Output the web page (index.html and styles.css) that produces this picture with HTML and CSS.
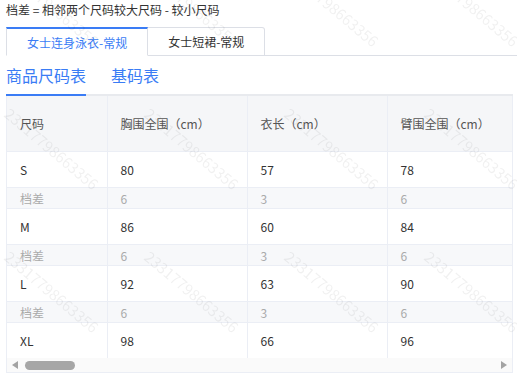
FILE: index.html
```html
<!DOCTYPE html>
<html lang="zh-CN">
<head>
    <meta charset="UTF-8">
    <meta name="viewport" content="width=device-width, initial-scale=1.0">
    <title>尺码表</title>
    <link rel="stylesheet" href="styles.css">
</head>
<body>
    <div class="page">
        <p class="note">档差 = 相邻两个尺码较大尺码 - 较小尺码</p>

        <!-- 款式切换 -->
        <div class="tabs">
            <div class="tab active">女士连身泳衣-常规</div>
            <div class="tab">女士短裙-常规</div>
        </div>

        <div class="subtabs">
            <div class="subtab active">商品尺码表</div>
            <div class="subtab">基码表</div>
        </div>

        <div class="table-box">
            <div class="table-scroll">
                <table class="size-table">
                    <colgroup>
                        <col class="c-size">
                        <col class="c-val">
                        <col class="c-val">
                        <col class="c-val">
                    </colgroup>
                    <thead>
                        <tr>
                            <th>尺码</th>
                            <th>胸围全围（cm）</th>
                            <th>衣长（cm）</th>
                            <th>臂围全围（cm）</th>
                        </tr>
                    </thead>
                    <tbody>
                        <tr class="row"><td>S</td><td>80</td><td>57</td><td>78</td></tr>
                        <tr class="diff"><td>档差</td><td>6</td><td>3</td><td>6</td></tr>
                        <tr class="row"><td>M</td><td>86</td><td>60</td><td>84</td></tr>
                        <tr class="diff"><td>档差</td><td>6</td><td>3</td><td>6</td></tr>
                        <tr class="row"><td>L</td><td>92</td><td>63</td><td>90</td></tr>
                        <tr class="diff"><td>档差</td><td>6</td><td>3</td><td>6</td></tr>
                        <tr class="row"><td>XL</td><td>98</td><td>66</td><td>96</td></tr>
                    </tbody>
                </table>
            </div>
            <!-- 横向滚动条 -->
            <div class="scrollbar">
                <svg class="arrow" width="7" height="8" viewBox="0 0 7 8"><path d="M6 0 L0 4 L6 8 Z" fill="#a3a3a3"/></svg>
                <div class="track"><div class="thumb"></div></div>
                <svg class="arrow" width="7" height="8" viewBox="0 0 7 8"><path d="M0 0 L6 4 L0 8 Z" fill="#a3a3a3"/></svg>
            </div>
        </div>
    </div>

    <!-- 水印 -->
    <div class="watermark">
        <span>23317798663356</span><span>23317798663356</span><span>23317798663356</span><span>23317798663356</span>
        <span>23317798663356</span><span>23317798663356</span><span>23317798663356</span><span>23317798663356</span>
        <span>23317798663356</span><span>23317798663356</span><span>23317798663356</span><span>23317798663356</span>
    </div>
</body>
</html>
```

FILE: styles.css
```css
body {
    margin: 0;
    font-family: "Noto Sans CJK SC", "Noto Sans", sans-serif;
    font-size: 12px;
    color: #333333;
    background: #ffffff;
    overflow: hidden;
}
.page {
    padding: 0 4px 0 6px;
}
.note {
    margin: 0 0 7px;
    line-height: 20px;
    color: #333333;
}

/* 款式切换 */
.tabs {
    display: flex;
    border-bottom: 1px solid #dcdfe6;
    margin-right: -4px;
}
.tab {
    height: 27px;
    line-height: 27px;
    padding: 0 20px;
    border: 1px solid #dcdfe6;
    border-left: none;
    border-radius: 0 3px 0 0;
    margin-bottom: -1px;
    color: #333333;
}
.tab.active {
    border-left: 1px solid #dcdfe6;
    border-top: 2px solid #3a7cf5;
    border-bottom: 1px solid #ffffff;
    border-radius: 0;
    height: 26px;
    color: #3a7cf5;
}

.subtabs {
    display: flex;
    gap: 25px;
    border-bottom: 2px solid #e8eaee;
}
.subtab {
    font-size: 16px;
    line-height: 38px;
    color: #3a7cf5;
    margin-bottom: -2px;
    border-bottom: 2px solid transparent;
}
.subtab.active {
    border-bottom-color: #3a7cf5;
}

/* 尺码表 */
.table-box {
    border: 1px solid #ebeef5;
    border-top: none;
}
.table-scroll {
    overflow: hidden;
}
.size-table {
    border-collapse: collapse;
    table-layout: fixed;
    width: 520px;
}
.c-size {
    width: 100px;
}
.c-val {
    width: 140px;
}
.size-table th,
.size-table td {
    text-align: left;
    padding: 0 0 0 13px;
    border-right: 1px solid #ebeef5;
    border-bottom: 1px solid #ebeef5;
    white-space: nowrap;
}
.size-table th {
    height: 55px;
    font-weight: normal;
    color: #555555;
    background: #f5f6f8;
}
.row td {
    height: 35px;
    color: #333333;
}
.diff td {
    height: 20px;
    color: #aaaaaa;
    background: #f7f8fa;
}
.row:last-child td {
    border-bottom: none;
}

/* 滚动条 */
.scrollbar {
    display: flex;
    align-items: center;
    height: 14px;
    background: #fafafa;
    padding: 0 4px 0 5px;
}
.track {
    flex: 1;
    padding: 0 6px;
}
.thumb {
    width: 50px;
    height: 9px;
    border-radius: 5px;
    background: #a6a6a6;
}

/* 水印 */
.watermark {
    position: fixed;
    left: 14px;
    top: -40px;
    display: grid;
    grid-template-columns: repeat(4, 140px);
    grid-auto-rows: 143px;
    pointer-events: none;
}
.watermark span {
    display: block;
    font-size: 15px;
    color: rgba(0, 0, 0, 0.06);
    transform: rotate(40deg);
    transform-origin: left top;
    white-space: nowrap;
}
```
